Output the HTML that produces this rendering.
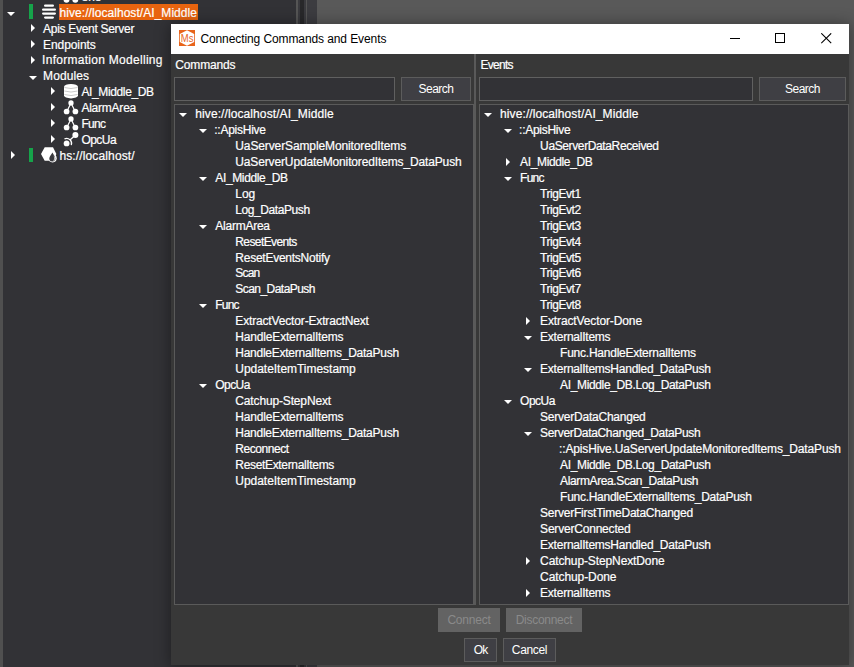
<!DOCTYPE html><html><head><meta charset='utf-8'><title>Connecting Commands and Events</title><style>
*{box-sizing:border-box;margin:0;padding:0}
html,body{width:854px;height:667px;overflow:hidden;background:#323236}
body{position:relative;font-family:"Liberation Sans", Arial, sans-serif;font-size:12px;color:#fff;line-height:16px}
.abs{position:absolute}
.t{position:absolute;white-space:nowrap;height:16px;line-height:16px;color:#fff;-webkit-text-stroke:0.2px currentColor}
.a{position:absolute;display:block}
.box{position:absolute;background:#323236;border:1px solid #5a5a5a}
.btn{position:absolute;background:#3f3f44;border:1px solid #5c5c5c;color:#fff;text-align:center;white-space:nowrap}
.btn.dis{background:#636363;border-color:#636363;color:#8a8a8a}
</style></head><body>
<div class="abs" style="left:0;top:0;width:3px;height:667px;background:#505050"></div>
<div class="abs" style="left:296px;top:0;width:2px;height:667px;background:#555"></div>
<div class="abs" style="left:298px;top:0;width:2px;height:667px;background:#3a3a3e"></div>
<div class="abs" style="left:300px;top:0;width:4px;height:667px;background:#28282a"></div>
<div class="abs" style="left:304px;top:0;width:2px;height:667px;background:#3a3a3e"></div>
<div class="abs" style="left:306px;top:0;width:1px;height:667px;background:#555"></div>
<div class="abs" style="left:307px;top:0;width:10px;height:667px;background:#3c3c40"></div>
<div class="abs" style="left:317px;top:0;width:537px;height:667px;background:#595959"></div>
<svg class="a" style="left:60px;top:0" width="24" height="4" viewBox="0 0 24 4"><circle cx="6.5" cy="-0.1" r="2.9" fill="#fff"/><circle cx="15.3" cy="-0.1" r="2.9" fill="#fff"/></svg>
<div class="t" style="left:81.5px;top:-11px">ene</div>
<div class="abs" style="left:59px;top:4px;width:139px;height:16px;background:#e8640f"></div>
<div class="abs" style="left:29px;top:4px;width:4px;height:15px;background:#16a34a"></div>
<div class="abs" style="left:29px;top:148px;width:4px;height:14px;background:#16a34a"></div>
<svg class="a" style="left:42px;top:4px" width="14" height="15" viewBox="0 0 14 15"><g fill="#fff"><rect x="2" y="0.5" width="10" height="2.3" rx="1.15"/><rect x="0" y="4.5" width="14" height="2.3" rx="1.15"/><rect x="0" y="8.4" width="14" height="2.3" rx="1.15"/><rect x="2" y="12.4" width="10" height="2.3" rx="1.15"/></g></svg>
<svg class="a" style="left:64px;top:84px" width="14" height="15" viewBox="0 0 14 15"><path d="M0 2.8A7 2.8 0 0 1 14 2.8V11.6A7 2.8 0 0 1 0 11.6Z" fill="#fff"/><g fill="none" stroke="#bcbcbc" stroke-width="0.8"><path d="M0.4 3.5Q7 5.6 13.6 3.5"/><path d="M0.4 7Q7 9.1 13.6 7"/><path d="M0.4 10.5Q7 12.6 13.6 10.5"/></g></svg>
<svg class="a" style="left:63px;top:100px" width="16" height="15" viewBox="0 0 16 15"><g fill="#fff"><path d="M8 3L3.8 11.4M8 3L12.2 11.4" stroke="#fff" stroke-width="1.2" fill="none"/><circle cx="8" cy="2.9" r="2.65"/><circle cx="3.6" cy="11.5" r="2.85"/><circle cx="12.4" cy="11.5" r="2.85"/></g></svg>
<svg class="a" style="left:63px;top:116px" width="16" height="15" viewBox="0 0 16 15"><g fill="#fff"><path d="M8 3L3.8 11.4M8 3L12.2 11.4" stroke="#fff" stroke-width="1.2" fill="none"/><circle cx="8" cy="2.9" r="2.65"/><circle cx="3.6" cy="11.5" r="2.85"/><circle cx="12.4" cy="11.5" r="2.85"/></g></svg>
<svg class="a" style="left:63px;top:131px" width="16" height="16" viewBox="0 0 16 16"><g fill="#fff"><path d="M12.4 4.1L7 9.1" stroke="#fff" stroke-width="1.3"/><circle cx="12.4" cy="4.1" r="3"/><circle cx="3.6" cy="12.4" r="2.9"/><path d="M1.49 7.87A5 5 0 0 1 8.3 14.11" fill="none" stroke="#fff" stroke-width="1.2"/></g></svg>
<svg class="a" style="left:41px;top:146px" width="17" height="17" viewBox="0 0 17 17"><path d="M0 8L3.7 1.2H12L15.4 8L12 14.7H3.7Z" fill="#fff"/><circle cx="11.6" cy="12.3" r="4.1" fill="#fff"/><path d="M11.4 6.4C10.5 8.5 8.3 10.5 8.3 12.5A3 3 0 0 0 14.3 12.5C14.3 10.5 12.3 8.5 11.4 6.4Z" fill="#3a3a3e"/><path d="M12.6 9.2C13.6 10.6 14.3 11.5 14.3 12.5A3 3 0 0 1 11.3 15.5C13.6 14.5 13.2 11.5 12.6 9.2Z" fill="#bbb"/></svg>
<svg class="a" style="left:7.0px;top:12.0px" width="8" height="4" viewBox="0 0 8 4"><path d="M0 0H8L4 4Z" fill="#fff"/></svg>
<div class="t" style="left:59.60px;top:5.00px;letter-spacing:0.052px">hive://localhost/AI_Middle</div>
<svg class="a" style="left:31.0px;top:24.0px" width="4" height="8" viewBox="0 0 4 8"><path d="M0 0L4 4L0 8Z" fill="#fff"/></svg>
<div class="t" style="left:43.10px;top:20.50px;letter-spacing:-0.297px">Apis Event Server</div>
<svg class="a" style="left:31.0px;top:40.0px" width="4" height="8" viewBox="0 0 4 8"><path d="M0 0L4 4L0 8Z" fill="#fff"/></svg>
<div class="t" style="left:43.10px;top:36.50px;letter-spacing:-0.084px">Endpoints</div>
<svg class="a" style="left:31.0px;top:55.5px" width="4" height="8" viewBox="0 0 4 8"><path d="M0 0L4 4L0 8Z" fill="#fff"/></svg>
<div class="t" style="left:42.10px;top:52.00px;letter-spacing:0.282px">Information Modelling</div>
<svg class="a" style="left:29.0px;top:76.0px" width="8" height="4" viewBox="0 0 8 4"><path d="M0 0H8L4 4Z" fill="#fff"/></svg>
<div class="t" style="left:43.10px;top:68.00px;letter-spacing:0.09px">Modules</div>
<svg class="a" style="left:51.0px;top:87.0px" width="4" height="8" viewBox="0 0 4 8"><path d="M0 0L4 4L0 8Z" fill="#fff"/></svg>
<div class="t" style="left:81.40px;top:83.50px;letter-spacing:-0.364px">AI_Middle_DB</div>
<svg class="a" style="left:51.0px;top:103.0px" width="4" height="8" viewBox="0 0 4 8"><path d="M0 0L4 4L0 8Z" fill="#fff"/></svg>
<div class="t" style="left:81.40px;top:99.50px;letter-spacing:-0.226px">AlarmArea</div>
<svg class="a" style="left:51.0px;top:119.0px" width="4" height="8" viewBox="0 0 4 8"><path d="M0 0L4 4L0 8Z" fill="#fff"/></svg>
<div class="t" style="left:81.40px;top:115.50px;letter-spacing:-0.693px">Func</div>
<svg class="a" style="left:51.0px;top:135.0px" width="4" height="8" viewBox="0 0 4 8"><path d="M0 0L4 4L0 8Z" fill="#fff"/></svg>
<div class="t" style="left:81.40px;top:131.50px;letter-spacing:-0.518px">OpcUa</div>
<svg class="a" style="left:11.0px;top:151.0px" width="4" height="8" viewBox="0 0 4 8"><path d="M0 0L4 4L0 8Z" fill="#fff"/></svg>
<div class="t" style="left:59.40px;top:147.50px;letter-spacing:0.133px">hs://localhost/</div>
<div class="abs" style="left:171px;top:24px;width:678px;height:641px;background:#383838;box-shadow:0 1px 14px 1px rgba(0,0,0,0.38)"></div>
<div class="abs" style="left:171px;top:24px;width:678px;height:30px;background:#fff"></div>
<svg class="a" style="left:179px;top:30px" width="16" height="16" viewBox="0 0 16 16"><rect width="16" height="16" fill="#e8641b"/><path d="M8 0.2L15.2 4.1V11.9L8 15.8L0.8 11.9V4.1Z" fill="#fff"/><text x="1.8" y="11.8" font-family="Liberation Sans, Arial, sans-serif" font-size="10.6" textLength="12.6" lengthAdjust="spacingAndGlyphs" fill="#e8641b">Ms</text></svg>
<div class="t" style="left:200.40px;top:31px;color:#000;-webkit-text-stroke:0;letter-spacing:-0.096px">Connecting Commands and Events</div>
<svg class="a" style="left:730px;top:32px" width="12" height="12" viewBox="0 0 12 12"><path d="M0 6.5H10" stroke="#000" stroke-width="1"/></svg>
<svg class="a" style="left:775px;top:33px" width="11" height="11" viewBox="0 0 11 11"><rect x="0.5" y="0.5" width="9" height="9" fill="none" stroke="#000" stroke-width="1"/></svg>
<svg class="a" style="left:820.8px;top:33px" width="11" height="11" viewBox="0 0 11 11"><path d="M0.3 0.3L10.2 10.2M10.2 0.3L0.3 10.2" stroke="#000" stroke-width="1.1"/></svg>
<div class="t" style="left:175.30px;top:57px;letter-spacing:-0.165px">Commands</div>
<div class="t" style="left:480.60px;top:57px;letter-spacing:-0.737px">Events</div>
<div class="box" style="left:174px;top:77px;width:221px;height:24px;border-color:#606060"></div>
<div class="btn" style="left:401px;top:77px;width:70px;height:24px;line-height:22px;letter-spacing:-0.51px">Search</div>
<div class="box" style="left:479px;top:77px;width:274px;height:24px;border-color:#606060"></div>
<div class="btn" style="left:759px;top:77px;width:87px;height:24px;line-height:22px;letter-spacing:-0.51px">Search</div>
<div class="box" style="left:174px;top:104px;width:300px;height:501px"></div>
<div class="box" style="left:479px;top:104px;width:370px;height:501px"></div>
<div class="abs" style="left:474px;top:54px;width:2px;height:551px;background:#595959"></div>
<svg class="a" style="left:178.9px;top:112.5px" width="8" height="4" viewBox="0 0 8 4"><path d="M0 0H8L4 4Z" fill="#fff"/></svg>
<div class="t" style="left:195.30px;top:106.00px;letter-spacing:0.092px">hive://localhost/AI_Middle</div>
<svg class="a" style="left:198.9px;top:128.5px" width="8" height="4" viewBox="0 0 8 4"><path d="M0 0H8L4 4Z" fill="#fff"/></svg>
<div class="t" style="left:214.30px;top:122.00px;letter-spacing:-0.26px">::ApisHive</div>
<div class="t" style="left:235.30px;top:138.00px;letter-spacing:-0.117px">UaServerSampleMonitoredItems</div>
<div class="t" style="left:235.30px;top:154.00px;letter-spacing:-0.141px">UaServerUpdateMonitoredItems_DataPush</div>
<svg class="a" style="left:198.9px;top:176.5px" width="8" height="4" viewBox="0 0 8 4"><path d="M0 0H8L4 4Z" fill="#fff"/></svg>
<div class="t" style="left:215.30px;top:170.00px;letter-spacing:-0.364px">AI_Middle_DB</div>
<div class="t" style="left:235.30px;top:186.00px;letter-spacing:-0.024px">Log</div>
<div class="t" style="left:235.30px;top:202.00px;letter-spacing:-0.42px">Log_DataPush</div>
<svg class="a" style="left:198.9px;top:224.5px" width="8" height="4" viewBox="0 0 8 4"><path d="M0 0H8L4 4Z" fill="#fff"/></svg>
<div class="t" style="left:215.30px;top:218.00px;letter-spacing:-0.251px">AlarmArea</div>
<div class="t" style="left:235.30px;top:234.00px;letter-spacing:-0.603px">ResetEvents</div>
<div class="t" style="left:235.30px;top:250.00px;letter-spacing:-0.25px">ResetEventsNotify</div>
<div class="t" style="left:235.30px;top:265.00px;letter-spacing:-0.793px">Scan</div>
<div class="t" style="left:235.30px;top:281.00px;letter-spacing:-0.546px">Scan_DataPush</div>
<svg class="a" style="left:198.9px;top:303.5px" width="8" height="4" viewBox="0 0 8 4"><path d="M0 0H8L4 4Z" fill="#fff"/></svg>
<div class="t" style="left:215.30px;top:297.00px;letter-spacing:-0.793px">Func</div>
<div class="t" style="left:235.30px;top:313.00px;letter-spacing:-0.156px">ExtractVector-ExtractNext</div>
<div class="t" style="left:235.30px;top:329.00px;letter-spacing:-0.171px">HandleExternalItems</div>
<div class="t" style="left:235.30px;top:345.00px;letter-spacing:-0.259px">HandleExternalItems_DataPush</div>
<div class="t" style="left:235.30px;top:361.00px;letter-spacing:-0.031px">UpdateItemTimestamp</div>
<svg class="a" style="left:198.9px;top:383.5px" width="8" height="4" viewBox="0 0 8 4"><path d="M0 0H8L4 4Z" fill="#fff"/></svg>
<div class="t" style="left:215.30px;top:377.00px;letter-spacing:-0.568px">OpcUa</div>
<div class="t" style="left:235.30px;top:393.00px;letter-spacing:-0.148px">Catchup-StepNext</div>
<div class="t" style="left:235.30px;top:409.00px;letter-spacing:-0.171px">HandleExternalItems</div>
<div class="t" style="left:235.30px;top:425.00px;letter-spacing:-0.259px">HandleExternalItems_DataPush</div>
<div class="t" style="left:235.30px;top:441.00px;letter-spacing:-0.442px">Reconnect</div>
<div class="t" style="left:235.30px;top:457.00px;letter-spacing:-0.336px">ResetExternalItems</div>
<div class="t" style="left:235.30px;top:473.00px;letter-spacing:-0.031px">UpdateItemTimestamp</div>
<svg class="a" style="left:483.7px;top:112.5px" width="8" height="4" viewBox="0 0 8 4"><path d="M0 0H8L4 4Z" fill="#fff"/></svg>
<div class="t" style="left:500.10px;top:106.00px;letter-spacing:0.088px">hive://localhost/AI_Middle</div>
<svg class="a" style="left:503.7px;top:128.5px" width="8" height="4" viewBox="0 0 8 4"><path d="M0 0H8L4 4Z" fill="#fff"/></svg>
<div class="t" style="left:519.10px;top:122.00px;letter-spacing:-0.272px">::ApisHive</div>
<div class="t" style="left:540.10px;top:138.00px;letter-spacing:-0.378px">UaServerDataReceived</div>
<svg class="a" style="left:505.7px;top:158.0px" width="4" height="8" viewBox="0 0 4 8"><path d="M0 0L4 4L0 8Z" fill="#fff"/></svg>
<div class="t" style="left:520.10px;top:154.00px;letter-spacing:-0.364px">AI_Middle_DB</div>
<svg class="a" style="left:503.7px;top:176.5px" width="8" height="4" viewBox="0 0 8 4"><path d="M0 0H8L4 4Z" fill="#fff"/></svg>
<div class="t" style="left:520.10px;top:170.00px;letter-spacing:-0.793px">Func</div>
<div class="t" style="left:540.10px;top:186.00px;letter-spacing:-0.466px">TrigEvt1</div>
<div class="t" style="left:540.10px;top:202.00px;letter-spacing:-0.466px">TrigEvt2</div>
<div class="t" style="left:540.10px;top:218.00px;letter-spacing:-0.466px">TrigEvt3</div>
<div class="t" style="left:540.10px;top:234.00px;letter-spacing:-0.466px">TrigEvt4</div>
<div class="t" style="left:540.10px;top:250.00px;letter-spacing:-0.466px">TrigEvt5</div>
<div class="t" style="left:540.10px;top:265.00px;letter-spacing:-0.466px">TrigEvt6</div>
<div class="t" style="left:540.10px;top:281.00px;letter-spacing:-0.466px">TrigEvt7</div>
<div class="t" style="left:540.10px;top:297.00px;letter-spacing:-0.466px">TrigEvt8</div>
<svg class="a" style="left:525.7px;top:317.0px" width="4" height="8" viewBox="0 0 4 8"><path d="M0 0L4 4L0 8Z" fill="#fff"/></svg>
<div class="t" style="left:540.10px;top:313.00px;letter-spacing:-0.122px">ExtractVector-Done</div>
<svg class="a" style="left:523.7px;top:335.5px" width="8" height="4" viewBox="0 0 8 4"><path d="M0 0H8L4 4Z" fill="#fff"/></svg>
<div class="t" style="left:540.10px;top:329.00px;letter-spacing:-0.238px">ExternalItems</div>
<div class="t" style="left:560.10px;top:345.00px;letter-spacing:-0.239px">Func.HandleExternalItems</div>
<svg class="a" style="left:523.7px;top:367.5px" width="8" height="4" viewBox="0 0 8 4"><path d="M0 0H8L4 4Z" fill="#fff"/></svg>
<div class="t" style="left:540.10px;top:361.00px;letter-spacing:-0.238px">ExternalItemsHandled_DataPush</div>
<div class="t" style="left:560.10px;top:377.00px;letter-spacing:-0.361px">AI_Middle_DB.Log_DataPush</div>
<svg class="a" style="left:503.7px;top:399.5px" width="8" height="4" viewBox="0 0 8 4"><path d="M0 0H8L4 4Z" fill="#fff"/></svg>
<div class="t" style="left:520.10px;top:393.00px;letter-spacing:-0.518px">OpcUa</div>
<div class="t" style="left:540.10px;top:409.00px;letter-spacing:-0.233px">ServerDataChanged</div>
<svg class="a" style="left:523.7px;top:431.5px" width="8" height="4" viewBox="0 0 8 4"><path d="M0 0H8L4 4Z" fill="#fff"/></svg>
<div class="t" style="left:540.10px;top:425.00px;letter-spacing:-0.328px">ServerDataChanged_DataPush</div>
<div class="t" style="left:559.10px;top:441.00px;letter-spacing:-0.147px">::ApisHive.UaServerUpdateMonitoredItems_DataPush</div>
<div class="t" style="left:560.10px;top:457.00px;letter-spacing:-0.361px">AI_Middle_DB.Log_DataPush</div>
<div class="t" style="left:560.10px;top:473.00px;letter-spacing:-0.38px">AlarmArea.Scan_DataPush</div>
<div class="t" style="left:560.10px;top:489.00px;letter-spacing:-0.278px">Func.HandleExternalItems_DataPush</div>
<div class="t" style="left:540.10px;top:505.00px;letter-spacing:-0.235px">ServerFirstTimeDataChanged</div>
<div class="t" style="left:540.10px;top:521.00px;letter-spacing:-0.201px">ServerConnected</div>
<div class="t" style="left:540.10px;top:537.00px;letter-spacing:-0.238px">ExternalItemsHandled_DataPush</div>
<svg class="a" style="left:525.7px;top:557.0px" width="4" height="8" viewBox="0 0 4 8"><path d="M0 0L4 4L0 8Z" fill="#fff"/></svg>
<div class="t" style="left:540.10px;top:553.00px;letter-spacing:-0.114px">Catchup-StepNextDone</div>
<div class="t" style="left:540.10px;top:569.00px;letter-spacing:-0.091px">Catchup-Done</div>
<svg class="a" style="left:525.7px;top:589.0px" width="4" height="8" viewBox="0 0 4 8"><path d="M0 0L4 4L0 8Z" fill="#fff"/></svg>
<div class="t" style="left:540.10px;top:585.00px;letter-spacing:-0.238px">ExternalItems</div>
<div class="btn dis" style="left:438px;top:608px;width:62px;height:24px;line-height:22px;letter-spacing:-0.21px">Connect</div>
<div class="btn dis" style="left:506px;top:608px;width:76px;height:24px;line-height:22px;letter-spacing:-0.27px">Disconnect</div>
<div class="btn" style="left:464px;top:638px;width:33px;height:24px;line-height:22px;letter-spacing:-0.9px">Ok</div>
<div class="btn" style="left:503px;top:638px;width:53px;height:24px;line-height:22px;letter-spacing:-0.338px">Cancel</div>
</body></html>
